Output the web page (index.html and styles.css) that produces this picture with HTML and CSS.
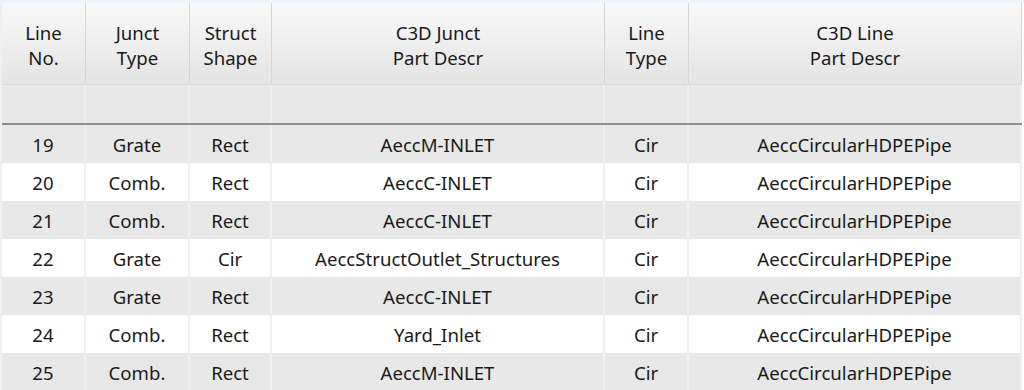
FILE: index.html
```html
<!DOCTYPE html>
<html>
<head>
<meta charset="utf-8">
<link rel="stylesheet" href="styles.css">
</head>
<body>
<div class="topstrip"></div>
<div class="grid">
  <div class="row head">
    <div class="cell">Line<br>No.</div>
    <div class="cell">Junct<br>Type</div>
    <div class="cell">Struct<br>Shape</div>
    <div class="cell">C3D Junct<br>Part Descr</div>
    <div class="cell">Line<br>Type</div>
    <div class="cell">C3D Line<br>Part Descr</div>
  </div>
  <div class="row filter">
    <div class="cell"></div><div class="cell"></div><div class="cell"></div><div class="cell"></div><div class="cell"></div><div class="cell"></div>
  </div>
  <div class="row data odd"><div class="cell">19</div><div class="cell">Grate</div><div class="cell">Rect</div><div class="cell">AeccM-INLET</div><div class="cell">Cir</div><div class="cell">AeccCircularHDPEPipe</div></div>
  <div class="row data"><div class="cell">20</div><div class="cell">Comb.</div><div class="cell">Rect</div><div class="cell">AeccC-INLET</div><div class="cell">Cir</div><div class="cell">AeccCircularHDPEPipe</div></div>
  <div class="row data odd"><div class="cell">21</div><div class="cell">Comb.</div><div class="cell">Rect</div><div class="cell">AeccC-INLET</div><div class="cell">Cir</div><div class="cell">AeccCircularHDPEPipe</div></div>
  <div class="row data"><div class="cell">22</div><div class="cell">Grate</div><div class="cell">Cir</div><div class="cell">AeccStructOutlet_Structures</div><div class="cell">Cir</div><div class="cell">AeccCircularHDPEPipe</div></div>
  <div class="row data odd"><div class="cell">23</div><div class="cell">Grate</div><div class="cell">Rect</div><div class="cell">AeccC-INLET</div><div class="cell">Cir</div><div class="cell">AeccCircularHDPEPipe</div></div>
  <div class="row data"><div class="cell">24</div><div class="cell">Comb.</div><div class="cell">Rect</div><div class="cell">Yard_Inlet</div><div class="cell">Cir</div><div class="cell">AeccCircularHDPEPipe</div></div>
  <div class="row data odd"><div class="cell">25</div><div class="cell">Comb.</div><div class="cell">Rect</div><div class="cell">AeccM-INLET</div><div class="cell">Cir</div><div class="cell">AeccCircularHDPEPipe</div></div>
</div>
</body>
</html>
```
FILE: styles.css
```css
html, body {
  margin: 0;
  padding: 0;
  background: #ffffff;
  overflow: hidden;
}
body {
  font-family: "Noto Sans", "Open Sans", sans-serif;
  font-size: 18.6px;
  color: #1a1a1a;
  width: 1024px;
  height: 390px;
}
.topstrip {
  height: 3px;
  background: #eff3fa;
}
.grid {
  border-left: 2px solid #f0f0f0;
  width: 1020px;
}
.row {
  display: grid;
  grid-template-columns: 84px 104px 82px 333px 84px 333px;
}
.cell {
  display: flex;
  align-items: center;
  justify-content: center;
  text-align: center;
  border-right: 1px solid #f0f0f0;
  white-space: nowrap;
}
.head {
  height: 81px;
  border-bottom: 1px solid #dadada;
  background: linear-gradient(#f9f9f9, #e4e4e4);
}
.head .cell {
  border-right: 1px solid #d6d6d6;
  line-height: 25px;
  padding-top: 2px;
}
.filter {
  height: 38px;
  background: #e8e8e8;
  border-bottom: 2px solid #8e8e8e;
}
.filter .cell {
  border-right: 2px solid #efefef;
}
.data {
  height: 38px;
  background: #ffffff;
}
.data.odd {
  background: #e8e8e8;
}
.data .cell {
  border-right: 2px solid #f0f0f0;
}
```
